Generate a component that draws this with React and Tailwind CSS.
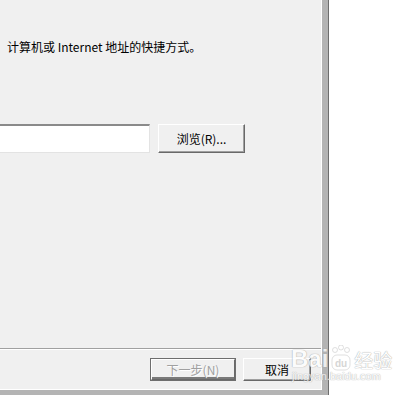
import React from "react";

const ui = { fontFamily: '"Noto Sans CJK SC", "Liberation Sans", sans-serif' };

function RaisedButton({ children, className = "", disabled = false }) {
  return (
    <div
      className={`flex items-center justify-center bg-[#f0f0f0] border border-t-white border-l-white border-r-[#696969] border-b-[#696969] shadow-[inset_-1px_-1px_0_#a0a0a0] text-[12px] ${
        disabled ? "text-[#a0a0a0] [text-shadow:1px_1px_0_#ffffff]" : "text-black"
      } ${className}`}
    >
      {children}
    </div>
  );
}

export default function App() {
  return (
    <div className="relative w-[403px] h-[395px] bg-white flex overflow-hidden" style={ui}>
      {/* window frame */}
      <div className="w-[329px] h-[395px] bg-[#b4b4b4] border-r border-[#6e6e6e]">
        <div className="w-[322px] h-[390px] bg-[#f0f0f0] border-r border-b border-white flex flex-col">
          <div className="pt-[39px] pl-[7px] text-[12px] leading-[16px] text-black">
            计算机或 Internet 地址的快捷方式。
          </div>

          <div className="mt-[69px] flex items-center gap-[8px]">
            <div className="w-[150px] h-[29px] bg-white border-t-2 border-r border-b border-t-[#8a8a8a] border-r-[#e3e3e3] border-b-[#e3e3e3]" />
            <RaisedButton className="w-[87px] h-[29px]">浏览(R)...</RaisedButton>
          </div>

          <div className="mt-[195px] h-[2px] border-t border-[#a0a0a0] border-b border-b-white" />

          <div className="mt-[8px] flex gap-[7px] pl-[150px]">
            <div className="border border-[#6e6e6e]">
              <RaisedButton disabled className="w-[84px] h-[21px] border-[#f0f0f0] shadow-[inset_0_-2px_0_#7a7a7a]">
                下一步(N)
              </RaisedButton>
            </div>
            <RaisedButton className="w-[68px] h-[23px]">取消</RaisedButton>
          </div>
        </div>
      </div>

      {/* watermark */}
      <div className="absolute left-[291px] top-[345px] pointer-events-none select-none opacity-75">
        <div className="flex items-end gap-[3px]">
          <span className="text-[24px] leading-[24px] font-bold text-white [text-shadow:0_0_1px_#9a9a9a,0_0_1px_#9a9a9a]" style={{ fontFamily: '"Liberation Sans", sans-serif' }}>
            Bai
          </span>
          <svg width="20" height="26" viewBox="0 0 20 26">
            <circle cx="4" cy="5" r="2.5" fill="#fff" stroke="#bbb" strokeWidth="0.6" />
            <circle cx="10" cy="2.5" r="2.5" fill="#fff" stroke="#bbb" strokeWidth="0.6" />
            <circle cx="16" cy="5" r="2.5" fill="#fff" stroke="#bbb" strokeWidth="0.6" />
            <rect x="1" y="10" width="18" height="15" rx="5" fill="#fff" stroke="#bbb" strokeWidth="0.6" />
            <text x="10" y="22" textAnchor="middle" fontSize="10" fill="#c8c8c8" fontFamily="Liberation Sans, sans-serif" fontWeight="bold">du</text>
          </svg>
          <span className="text-[19px] leading-[23px] text-white [text-shadow:0_0_1px_#9a9a9a,0_0_1px_#9a9a9a]">经验</span>
        </div>
        <div className="text-[11px] leading-[12px] text-white -mt-[1px] pl-[1px] [text-shadow:0_0_1px_#a0a0a0,0_0_1px_#a0a0a0]" style={{ fontFamily: '"Liberation Sans", sans-serif' }}>
          jingyan.baidu.com
        </div>
      </div>
    </div>
  );
}
